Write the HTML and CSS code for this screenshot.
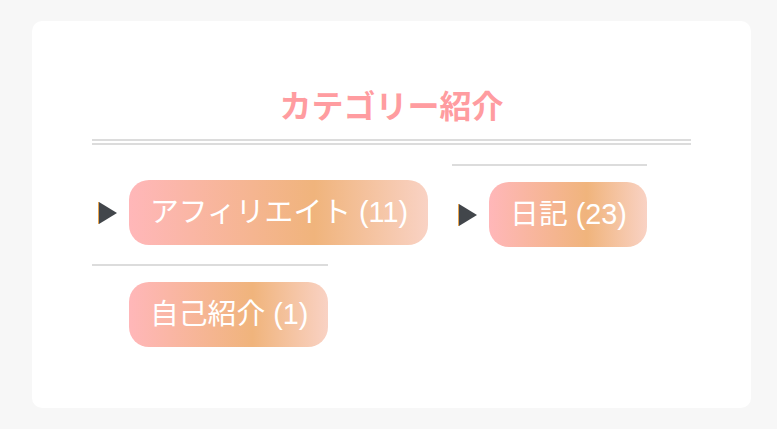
FILE: index.html
```html
<!DOCTYPE html>
<html lang="ja">
<head>
<meta charset="utf-8">
<title>カテゴリー紹介</title>
<link rel="stylesheet" href="styles.css">
</head>
<body>
  <section class="widget">
    <h2 class="widget-title">カテゴリー紹介</h2>
    <ul class="cat-list">
      <li class="cat-item">
        <svg class="marker" width="19" height="22" viewBox="0 0 19 22" aria-hidden="true"><polygon points="1,0 19,11 1,22" fill="#42464b"/><rect x="0" y="0" width="1" height="22" fill="#e9a650"/></svg>
        <a class="cat-pill" href="#">アフィリエイト (11)</a>
      </li>
      <li class="cat-item">
        <svg class="marker" width="19" height="22" viewBox="0 0 19 22" aria-hidden="true"><polygon points="1,0 19,11 1,22" fill="#42464b"/><rect x="0" y="0" width="1" height="22" fill="#e9a650"/></svg>
        <a class="cat-pill" href="#">日記 (23)</a>
      </li>
      <li class="cat-item">
        <span class="marker marker-empty"></span>
        <a class="cat-pill" href="#">自己紹介 (1)</a>
      </li>
    </ul>
  </section>
</body>
</html>
```

FILE: styles.css
```css
html, body {
  margin: 0;
  padding: 0;
}

body {
  background: #f7f7f7;
  padding: 21px 26px 21px 32px;
  font-family: "Liberation Sans", "Noto Sans CJK JP", sans-serif;
}

.widget {
  background: #ffffff;
  border-radius: 10px;
  padding: 59px 60px 44px;
}

.widget-title {
  margin: 0 0 19px;
  padding-bottom: 11px;
  border-bottom: 6px double #dcdcdc;
  text-align: center;
  color: #ff9ca0;
  font-family: "Noto Sans CJK JP", sans-serif;
  font-weight: 700;
  font-size: 32px;
  line-height: 48px;
}

.cat-list {
  list-style: none;
  margin: 0;
  padding: 0;
  display: flex;
  flex-wrap: wrap;
  align-items: flex-start;
  column-gap: 24px;
}

.cat-item {
  display: flex;
  align-items: center;
  padding: 16px 0 17px;
  border-top: 2px solid #dcdcdc;
}

.cat-item:first-child {
  border-top: 0;
}

.marker {
  display: block;
  width: 19px;
  height: 22px;
  margin: 0 12px 0 6px;
  flex: none;
}

.marker-empty {
  visibility: hidden;
}

.cat-pill {
  display: block;
  padding: 10px 20px 10px 21px;
  line-height: 45px;
  font-size: 28.8px;
  color: #ffffff;
  text-decoration: none;
  border-radius: 20px;
  background: linear-gradient(90deg, #ffb7b9 0%, #f0b47c 62%, #f9d2c4 100%);
  white-space: nowrap;
}
```
